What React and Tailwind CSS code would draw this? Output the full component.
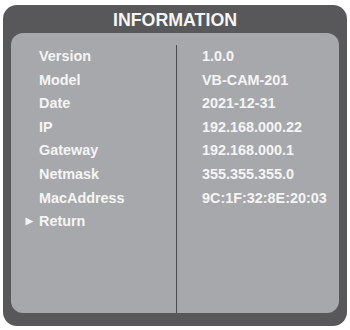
import React from 'react';

const rows = [
  { label: 'Version', value: '1.0.0' },
  { label: 'Model', value: 'VB-CAM-201' },
  { label: 'Date', value: '2021-12-31' },
  { label: 'IP', value: '192.168.000.22' },
  { label: 'Gateway', value: '192.168.000.1' },
  { label: 'Netmask', value: '355.355.355.0' },
  { label: 'MacAddress', value: '9C:1F:32:8E:20:03' },
];

const Arrow = () => (
  <svg width="9" height="9" viewBox="0 0 9 9" className="block">
    <polygon points="0.5,0.5 8.5,4.5 0.5,8.5" fill="#f3f3f3" />
  </svg>
);

const App = () => {
  return (
    <div
      className="w-[350px] h-[330px] bg-white pt-[5px] pl-[3px]"
      style={{ fontFamily: '"Liberation Sans", Arial, sans-serif' }}
    >
      <div className="w-[344px] h-[321px] rounded-[14px] bg-[#58585a] flex flex-col px-[8px] pb-[13px]">
        {/* Title */}
        <div className="h-[28px] pt-[1px] text-center text-[17.8px] leading-[28px] font-bold text-[#f5f5f5]">
          INFORMATION
        </div>

        {/* Info panel */}
        <div className="flex-1 rounded-[12px] bg-[#a7a8ab] pt-[12px] flex">
          <div className="w-[165px] pl-[14px]">
            {rows.map((r) => (
              <div key={r.label} className="flex items-center h-[23.6px] text-[14.4px] leading-[23.6px] font-bold text-[#f5f5f5]">
                <span className="w-[14px]" />
                <span>{r.label}</span>
              </div>
            ))}
            <div className="flex items-center h-[23.6px] text-[14.4px] leading-[23.6px] font-bold text-[#f5f5f5]">
              <span className="w-[14px] flex items-center">
                <Arrow />
              </span>
              <span>Return</span>
            </div>
          </div>
          <div className="flex-1 border-l-[1.5px] border-[#4c4c4e] pl-[25px]">
            {rows.map((r) => (
              <div key={r.label} className="h-[23.6px] text-[14.4px] leading-[23.6px] font-bold text-[#f5f5f5]">
                {r.value}
              </div>
            ))}
          </div>
        </div>
      </div>
    </div>
  );
};

export default App;
